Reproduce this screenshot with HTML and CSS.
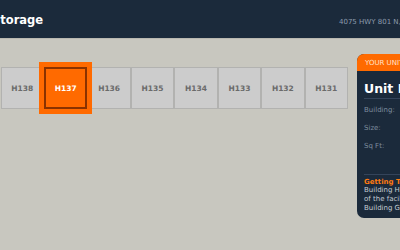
FILE: index.html
```html
<!DOCTYPE html>
<html lang="en">
<head>
    <meta charset="UTF-8">
    <meta name="viewport" content="width=device-width, initial-scale=1.0">
    <title>Storage Unit Map</title>
    <link rel="stylesheet" href="styles.css">
</head>
<body>
    <header class="top-bar">
        <h1 class="brand">Storage</h1>
        <span class="address">4075 HWY 801 N, Advance, NC</span>
    </header>

    <div class="main">
        <div class="map">
            <div class="unit-row">
                <div class="unit">H138</div>
                <div class="unit selected">H137</div>
                <div class="unit">H136</div>
                <div class="unit">H135</div>
                <div class="unit">H134</div>
                <div class="unit">H133</div>
                <div class="unit">H132</div>
                <div class="unit">H131</div>
            </div>
        </div>

        <div class="panel">
            <div class="panel-head">YOUR UNIT</div>
            <div class="panel-body">
                <h2 class="unit-name">Unit H137</h2>
                <div class="info-row"><span>Building:</span><span class="val">H</span></div>
                <div class="info-row"><span>Size:</span><span class="val">10x10</span></div>
                <div class="info-row"><span>Sq Ft:</span><span class="val">100</span></div>
                <div class="directions">
                    <div class="dir-title">Getting There</div>
                    <p>Building H is at the back<br>of the facility, just past<br>Building G.</p>
                </div>
            </div>
        </div>
    </div>
</body>
</html>
```

FILE: styles.css
```css
body {
    margin: 0;
    background-color: #c8c7bf;
    font-family: "DejaVu Sans", sans-serif;
    overflow: hidden;
}
.top-bar {
    height: 38px;
    background-color: #1b2a3b;
    border-bottom: 1px solid #b9b8b0;
    display: flex;
    align-items: center;
    white-space: nowrap;
}
.brand {
    flex: none;
    width: 347px;
    margin: 2px 0 0 -8px;
    font-size: 11.5px;
    font-weight: bold;
    color: white;
}
.address {
    flex: none;
    margin-top: 6px;
    font-size: 7px;
    color: #8c9bad;
}
.main {
    display: flex;
    padding-top: 15px;
}
.map {
    flex: none;
    width: 348px;
    padding-top: 13px;
}
.unit-row {
    display: flex;
    margin-left: 0.5px;
}
.unit {
    box-sizing: border-box;
    width: 43.5px;
    height: 42px;
    background-color: #cccccc;
    border: 1px solid #b2b2b0;
    display: flex;
    align-items: center;
    justify-content: center;
    font-size: 7.5px;
    font-weight: bold;
    color: #6a6a6a;
}
.unit.selected {
    background-color: #ff6a00;
    border: 2px solid #8a3200;
    outline: 5px solid #ff6a00;
    color: white;
    position: relative;
}
.panel {
    flex: none;
    width: 190px;
    margin-left: 9px;
    border-radius: 7px;
    overflow: hidden;
    background-color: #1b2a3b;
    white-space: nowrap;
}
.panel-head {
    background-color: #ff6a00;
    color: #ffe3cc;
    font-size: 7px;
    padding: 5px 8px 4px;
    height: 8px;
    line-height: 8px;
}
.panel-body {
    padding: 11px 7px 5px;
}
.unit-name {
    margin: 0;
    font-size: 12.5px;
    line-height: 14px;
    font-weight: bold;
    color: white;
    padding-bottom: 2px;
    border-bottom: 1px solid #34445a;
}
.info-row {
    display: flex;
    justify-content: space-between;
    font-size: 7px;
    line-height: 8px;
    color: #7d8c9e;
    margin-top: 10px;
}
.info-row:first-of-type {
    margin-top: 7px;
}
.info-row .val {
    color: white;
}
.directions {
    margin-top: 24px;
    border-top: 1px solid #34445a;
    padding-top: 3px;
}
.dir-title {
    font-size: 7px;
    line-height: 8px;
    font-weight: bold;
    color: #ff7a10;
}
.directions p {
    margin: 0;
    font-size: 7px;
    line-height: 9px;
    color: #c3cad3;
}
```
